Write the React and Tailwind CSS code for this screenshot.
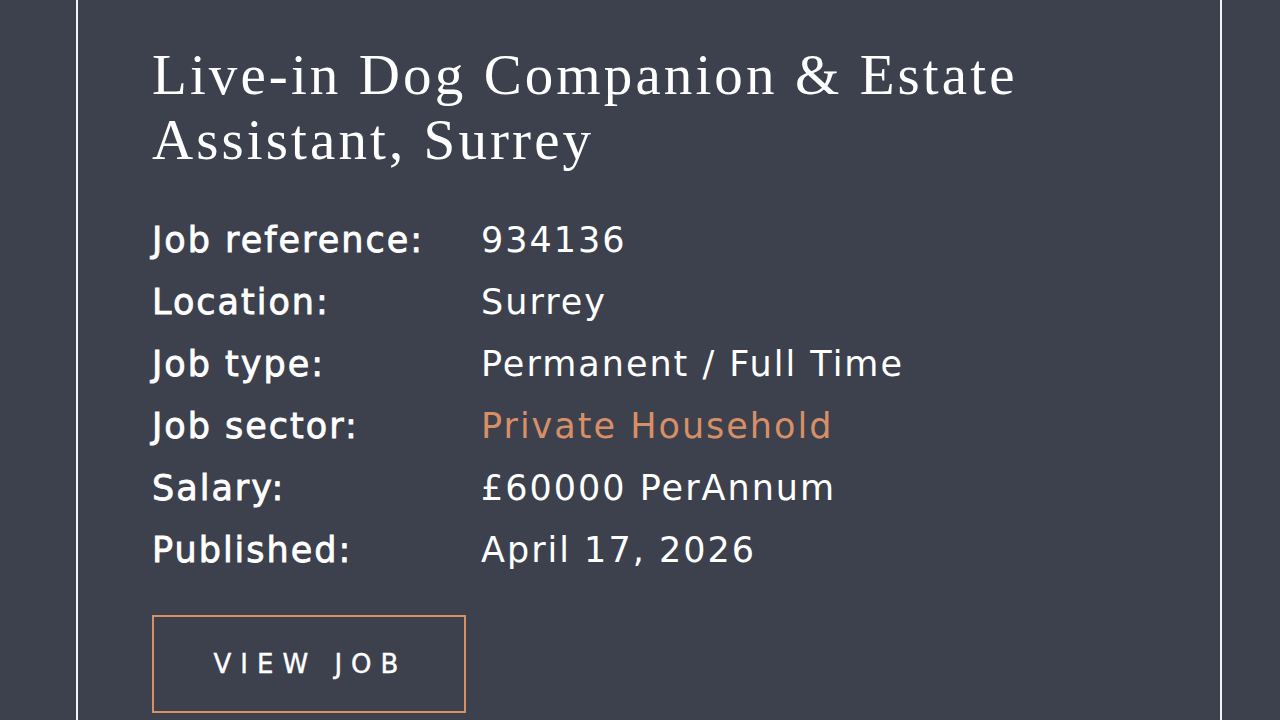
export default function App() {
  const rows = [
    ["Job reference:", "934136"],
    ["Location:", "Surrey"],
    ["Job type:", "Permanent / Full Time"],
    ["Job sector:", "Private Household", true],
    ["Salary:", "£60000 PerAnnum"],
    ["Published:", "April 17, 2026"],
  ];
  return (
    <div className="w-[1280px] h-[720px] overflow-hidden bg-[#3c414d]">
      <div className="ml-[76px] w-[1146px] h-[720px] border-x-2 border-[#f4f4f4] pl-[74px] pt-[42px]">
        <h1
          className="text-[57px] leading-[65px] text-white tracking-[3.1px]"
          style={{ fontFamily: '"Liberation Serif", serif' }}
        >
          Live-in Dog Companion &amp; Estate
          <br />
          Assistant, Surrey
        </h1>
        <div
          className="mt-[37px] grid grid-cols-[329px_auto] text-[35px] leading-[62px] text-white tracking-[2px]"
          style={{ fontFamily: '"DejaVu Sans", sans-serif' }}
        >
          {rows.map(([k, v, accent]) => (
            <div key={k} className="contents">
              <div className="[-webkit-text-stroke:0.8px_white]">{k}</div>
              <div className={accent ? "text-[#d98f66]" : ""}>{v}</div>
            </div>
          ))}
        </div>
        <div
          className="mt-[34px] w-[314px] h-[98px] border-2 border-[#d98f66] flex items-center justify-center text-white text-[26px] tracking-[9px] pl-[3px] [-webkit-text-stroke:0.4px_white]"
          style={{ fontFamily: '"DejaVu Sans", sans-serif' }}
        >
          VIEW JOB
        </div>
      </div>
    </div>
  );
}
